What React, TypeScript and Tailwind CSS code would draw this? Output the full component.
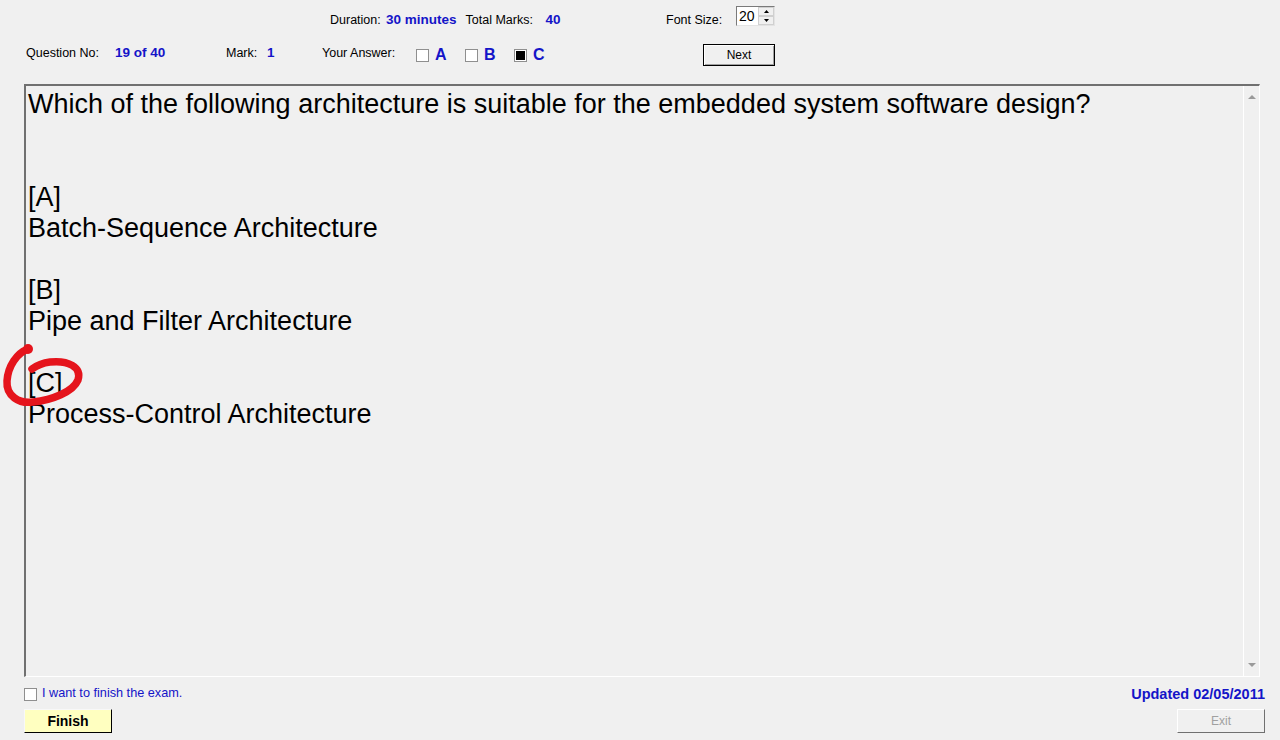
import React from "react";

const blue = "text-[#1414c8]";

function CheckBox({ checked = false }: { checked?: boolean }) {
  return (
    <span className="inline-flex h-[13px] w-[13px] items-center justify-center border border-[#8f8f8f] bg-white">
      {checked && <span className="h-[9px] w-[9px] bg-black" />}
    </span>
  );
}

function Spinner() {
  return (
    <div className="flex h-[20px] w-[39px] items-stretch border border-[#7a7a7a] border-r-[#e3e3e3] border-b-[#e3e3e3] bg-white">
      <span className="flex-1 pl-[2px] text-[14px] leading-[18px] text-black">20</span>
      <div className="flex w-[16px] flex-col">
        <div className="flex flex-1 items-center justify-center border border-[#d0d0d0] bg-[#f0f0f0]">
          <svg width="5" height="3" viewBox="0 0 5 3">
            <path d="M2.5 0 L5 3 L0 3 Z" fill="#000" />
          </svg>
        </div>
        <div className="flex flex-1 items-center justify-center border border-[#d0d0d0] bg-[#f0f0f0]">
          <svg width="5" height="3" viewBox="0 0 5 3">
            <path d="M0 0 L5 0 L2.5 3 Z" fill="#000" />
          </svg>
        </div>
      </div>
    </div>
  );
}

export default function App() {
  const lines = [
    "Which of the following architecture is suitable for the embedded system software design?",
    "",
    "",
    "[A]",
    "Batch-Sequence Architecture",
    "",
    "[B]",
    "Pipe and Filter Architecture",
    "",
    "[C]",
    "Process-Control Architecture",
  ];

  return (
    <div className="relative flex h-[740px] w-[1280px] flex-col overflow-hidden bg-[#f0f0f0] font-['Liberation_Sans',Arial,sans-serif] text-[12.5px] text-black">
      {/* Top info row */}
      <div className="flex h-[26px] items-start pl-[330px] pt-[6px]">
        <div className="mt-[7px] flex w-[336px] items-center leading-[14px]">
          <span className="w-[56px]">Duration:</span>
          <span className={`text-[13.5px] font-bold ${blue}`}>30 minutes</span>
          <span className="ml-[9px] w-[80px]">Total Marks:</span>
          <span className={`text-[13.5px] font-bold ${blue}`}>40</span>
        </div>
        <span className="mt-[7px] w-[70px] leading-[14px]">Font Size:</span>
        <Spinner />
      </div>

      {/* Question row */}
      <div className="mt-[18px] flex h-[22px] items-center pl-[26px]">
        <span className="mb-[4px] w-[89px]">Question No:</span>
        <span className={`mb-[4px] w-[111px] text-[13.5px] font-bold ${blue}`}>19 of 40</span>
        <span className="mb-[4px] w-[41px]">Mark:</span>
        <span className={`mb-[4px] w-[55px] text-[13.5px] font-bold ${blue}`}>1</span>
        <span className="mb-[4px] w-[94px]">Your Answer:</span>
        <div className="flex w-[287px] items-center">
          <CheckBox />
          <span className={`ml-[6px] w-[30px] text-[16px] font-bold ${blue}`}>A</span>
          <CheckBox />
          <span className={`ml-[6px] w-[30px] text-[16px] font-bold ${blue}`}>B</span>
          <CheckBox checked />
          <span className={`ml-[6px] text-[16px] font-bold ${blue}`}>C</span>
        </div>
        <button className="h-[22px] w-[72px] border border-black bg-[#f0f0f0] text-[12px] shadow-[inset_1px_1px_0_#fff,inset_-1px_-1px_0_#a0a0a0]">
          Next
        </button>
      </div>

      {/* Question text box */}
      <div className="ml-[24px] mt-[18px] flex h-[593px] w-[1236px] border-t-2 border-l-2 border-r border-b border-t-[#707070] border-l-[#707070] border-r-white border-b-white">
        <div className="flex-1 pl-[2px] pt-[3px] font-['Liberation_Sans',Arial,sans-serif] text-[27px] leading-[31px]">
          {lines.map((l, i) => (
            <div key={i} className="h-[31px] whitespace-pre">
              {l}
            </div>
          ))}
        </div>
        <div className="flex w-[16px] flex-col justify-between border-l border-l-white py-[8px]">
          <svg width="16" height="6" viewBox="0 0 16 6">
            <path d="M8 1 L12 5 L4 5 Z" fill="#9a9a9a" />
          </svg>
          <svg width="16" height="6" viewBox="0 0 16 6">
            <path d="M4 1 L12 1 L8 5 Z" fill="#9a9a9a" />
          </svg>
        </div>
      </div>

      {/* Bottom */}
      <div className="mt-[10px] flex items-start justify-between pl-[24px] pr-[15px]">
        <div className="flex flex-col">
          <div className="flex h-[14px] items-center">
            <CheckBox />
            <span className={`ml-[5px] text-[12.7px] ${blue}`}>I want to finish the exam.</span>
          </div>
          <button className="mt-[8px] h-[24px] w-[88px] border border-[#f8f8f8] border-r-black border-b-black bg-[#ffffc0] text-[14px] font-bold">
            Finish
          </button>
        </div>
        <div className="flex flex-col items-end">
          <span className={`h-[14px] text-[14.5px] font-bold leading-[14px] ${blue}`}>Updated 02/05/2011</span>
          <button className="mt-[8px] h-[24px] w-[88px] border border-white border-r-[#707070] border-b-[#707070] bg-[#f0f0f0] text-[12px] text-[#a0a0a0]">
            Exit
          </button>
        </div>
      </div>

      {/* Red annotation circle */}
      <svg
        className="pointer-events-none absolute left-0 top-[340px]"
        width="90"
        height="75"
        viewBox="0 340 90 75"
      >
        <path
          d="M28 349 C17 353 8 366 7 381 C6 396 19 404 33 402 C52 400 73 392 78 380 C82 367 68 360 50 362 C42 363 36 366 32 369"
          fill="none"
          stroke="#e5141c"
          strokeWidth="7.5"
          strokeLinecap="round"
        />
        <circle cx="28" cy="349" r="5" fill="#e5141c" />
      </svg>
    </div>
  );
}
